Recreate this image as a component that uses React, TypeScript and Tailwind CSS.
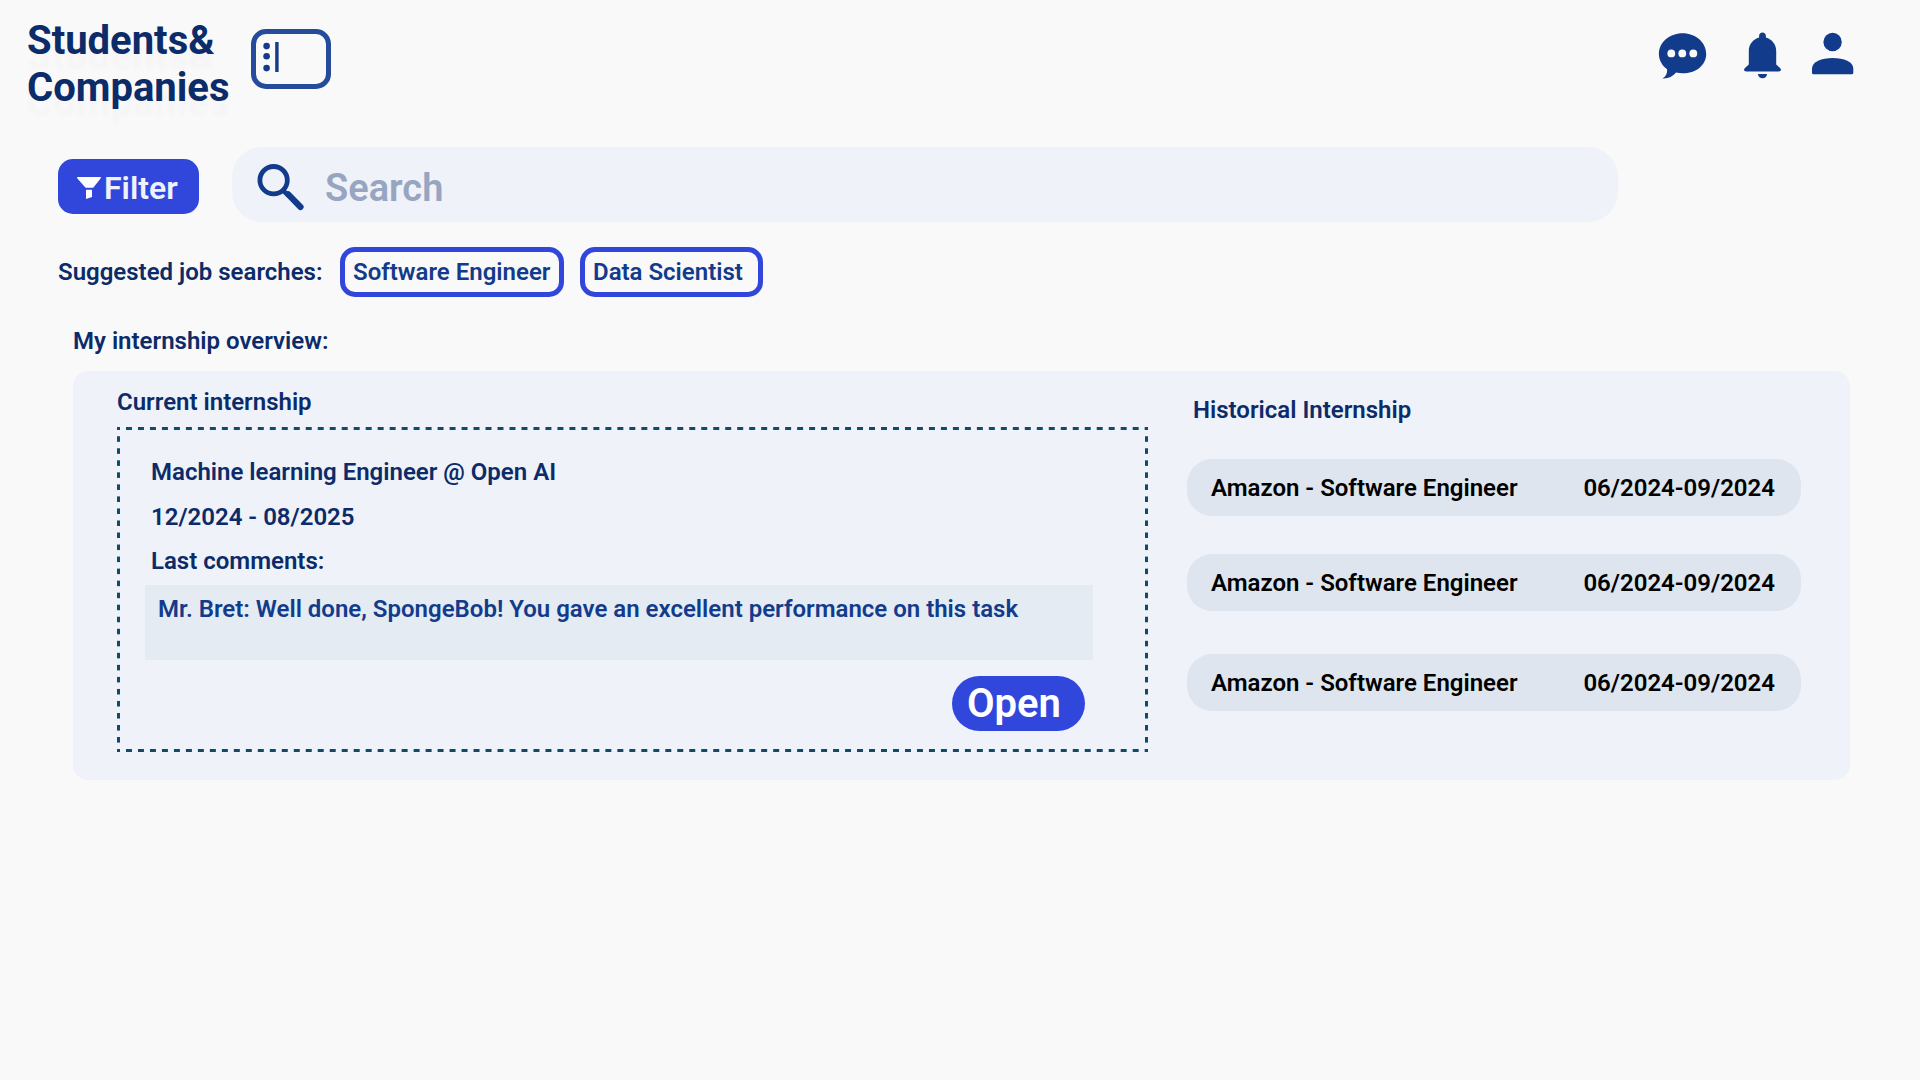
const history = [
  { id: 1, title: "Amazon - Software Engineer", period: "06/2024-09/2024", gap: "mt-[38px]" },
  { id: 2, title: "Amazon - Software Engineer", period: "06/2024-09/2024", gap: "mt-[38px]" },
  { id: 3, title: "Amazon - Software Engineer", period: "06/2024-09/2024", gap: "mt-[43px]" },
];

function Header() {
  return (
    <header className="flex h-[147px] items-start pt-[17px] pl-[27px] pr-[66px]">
      <h1 className="w-[224px] text-[40px] leading-[47px] font-bold text-[#0b2b69] [text-shadow:0_15px_4px_rgba(0,0,0,0.02)]">
        Students&amp;
        <br />
        Companies
      </h1>
      <button aria-label="Toggle sidebar" className="mt-3 h-[60px] w-20 rounded-[15px] border-5 border-[#244c9a]">
        <svg viewBox="0 0 70 50" className="h-[50px] w-[70px]" fill="#133b8a">
          <circle cx="10.6" cy="12.1" r="3.3" />
          <circle cx="10.6" cy="22.2" r="3.3" />
          <circle cx="10.6" cy="34.1" r="3.3" />
          <rect x="19.2" y="8" width="3.4" height="30" />
        </svg>
      </button>
      <nav className="ml-auto flex pt-[15px] text-[#123b8c]">
        <svg viewBox="-0.6 -0.6 48 47" className="mr-[38px] h-[47px] w-12 overflow-visible" fill="currentColor">
          <path d="M24 .7C10.800.7.3 10 .3 21.300c0 6.200 3.200 11.700 8.200 15.300.4 3.900-1 7-4.600 9.300 5.600.4 10-2 13.600-6 2.100.6 4.200.8 6.500.8 13.200 0 23.600-8.200 23.600-19.400S37.200.7 24 .7Z" />
          <g fill="#f9f9f9">
            <circle cx="12.700" cy="20.800" r="3.900" />
            <circle cx="23.700" cy="20.800" r="3.900" />
            <circle cx="34.700" cy="20.800" r="3.900" />
          </g>
        </svg>
        <svg viewBox="0 0 37 47" className="mr-[31px] h-[47px] w-[37px]" fill="currentColor">
          <path d="M18.500.5c-2 0-3.400 1.500-3.400 3.500v1.600C9 7.300 4.800 12.500 4.800 19v13.600L1.200 35.800C-.8 37.600 0 39.500 2.400 39.500h32.200c2.400 0 3.200-1.900 1.200-3.700l-3.600-3.200V19c0-6.500-4.200-11.700-10.300-13.400V4c0-2-1.400-3.500-3.400-3.500Z" />
          <path d="M13.900 41.900h9.200c-.3 2.700-2.200 4.300-4.600 4.300s-4.300-1.600-4.600-4.300Z" />
        </svg>
        <svg viewBox="0 0 42 47" className="h-[47px] w-[42px]" fill="currentColor">
          <circle cx="20.600" cy="10" r="9.200" />
          <path d="M0 36.500C0 30 9.500 26 20.700 26s20.600 4 20.600 10.500v4.200q0 1.600-1.600 1.600H1.600Q0 42.300 0 40.700Z" />
        </svg>
      </nav>
    </header>
  );
}

function SearchRow() {
  return (
    <div className="flex items-start pl-[58px]">
      <button className="mt-3 flex h-[55px] w-[141px] items-center rounded-[15px] bg-[#3147db] pl-[19px] text-[#eff2fb]">
        <svg viewBox="0 0 24 22" className="mt-[3px] h-[22px] w-6" fill="#fff">
          <path d="M0 0h24l-.6 1.700L16.200 10.800H8.600L.6 1.700Z" />
          <path d="M9 12.800h6v7.200l-6 1.900Z" />
        </svg>
        <span className="mt-[2px] ml-[3px] text-[32px] leading-[38px] font-semibold">Filter</span>
      </button>
      <div className="ml-[33px] flex h-[75px] w-[1386px] items-center rounded-[30px] bg-[#eff2f9] pt-[6px] pl-[25px]">
        <svg viewBox="0 0 48 48" className="-mt-[2px] h-12 w-12" fill="none" stroke="#123b8c">
          <circle cx="16.600" cy="17.200" r="13.700" strokeWidth="4.800" />
          <path d="M26 27.500 32 33" strokeWidth="4.500" />
          <path d="M31 31.200 43.500 44" strokeWidth="6.200" strokeLinecap="round" />
        </svg>
        <span className="mt-[2px] ml-5 text-[38px] leading-[45px] font-semibold text-[#97a5c1]">Search</span>
      </div>
    </div>
  );
}

function Suggestions() {
  return (
    <div className="mt-[25px] flex h-[50px] items-center pl-[58px] text-[24px] leading-[28px] font-semibold">
      <span className="w-[282px] text-[#0b2b69]">Suggested job searches:</span>
      <button className="flex h-[50px] w-[224px] items-center rounded-[15px] border-5 border-[#3147db] pl-2 whitespace-nowrap text-[#123b8c]">
        Software Engineer
      </button>
      <button className="ml-4 flex h-[50px] w-[183px] items-center rounded-[15px] border-5 border-[#3147db] pl-2 text-[#123b8c]">
        Data Scientist
      </button>
    </div>
  );
}

function CurrentInternship() {
  return (
    <section className="w-[1031px] pt-[17px]">
      <h3>Current internship</h3>
      <div className="relative mt-[11px] h-[325px] pt-[31px] pl-7">
        <div className="absolute inset-x-0 top-0 h-[3px] bg-[linear-gradient(90deg,#0f4c6c_25%,transparent_25%_75%,#0f4c6c_75%)] bg-[length:calc(100%/86)_3px]" />
        <div className="absolute inset-x-0 bottom-0 h-[3px] bg-[linear-gradient(90deg,#0f4c6c_25%,transparent_25%_75%,#0f4c6c_75%)] bg-[length:calc(100%/86)_3px]" />
        <div className="absolute inset-y-0 left-0 w-[3px] bg-[linear-gradient(180deg,#0f4c6c_25%,transparent_25%_75%,#0f4c6c_75%)] bg-[length:3px_calc(100%/27)]" />
        <div className="absolute inset-y-0 right-0 w-[3px] bg-[linear-gradient(180deg,#0f4c6c_25%,transparent_25%_75%,#0f4c6c_75%)] bg-[length:3px_calc(100%/27)]" />
        <div className="pl-[6px]">
          <p>Machine learning Engineer @ Open AI</p>
          <p className="mt-[17px]">12/2024 - 08/2025</p>
          <p className="mt-4">Last comments:</p>
        </div>
        <div className="mt-[10px] h-[75px] w-[948px] bg-[#e4ebf3] pt-[10px] pl-[13px] text-[#123b8c]">
          Mr. Bret: Well done, SpongeBob! You gave an excellent performance on this task
        </div>
        <button className="mt-4 ml-[807px] flex h-[55px] w-[133px] items-center rounded-[28px] bg-[#3147db] pl-[15px] text-[40px] leading-[47px] font-semibold text-white">
          Open
        </button>
      </div>
    </section>
  );
}

function HistoricalInternships() {
  return (
    <section className="ml-[39px] w-[614px] pt-[22px]">
      <h3 className="pt-[3px] pl-[6px]">Historical Internship</h3>
      <ul className="-mt-[3px]">
        {history.map((item) => (
          <li
            key={item.id}
            className={`${item.gap} flex h-[57px] items-center justify-between rounded-[25px] bg-[#dee5ee] pr-[26px] pl-6 text-black`}
          >
            <span>{item.title}</span>
            <span>{item.period}</span>
          </li>
        ))}
      </ul>
    </section>
  );
}

export default function App() {
  return (
    <div className="h-[1080px] w-[1920px] overflow-hidden bg-[#f9f9f9] font-['Roboto',sans-serif]">
      <Header />
      <SearchRow />
      <Suggestions />
      <main className="ml-[73px] text-[24px] leading-[28px] font-semibold text-[#0b2b69]">
        <h2 className="mt-[30px]">My internship overview:</h2>
        <div className="mt-4 flex h-[409px] w-[1777px] rounded-[15px] bg-[#eff2f9] pl-11">
          <CurrentInternship />
          <HistoricalInternships />
        </div>
      </main>
    </div>
  );
}
